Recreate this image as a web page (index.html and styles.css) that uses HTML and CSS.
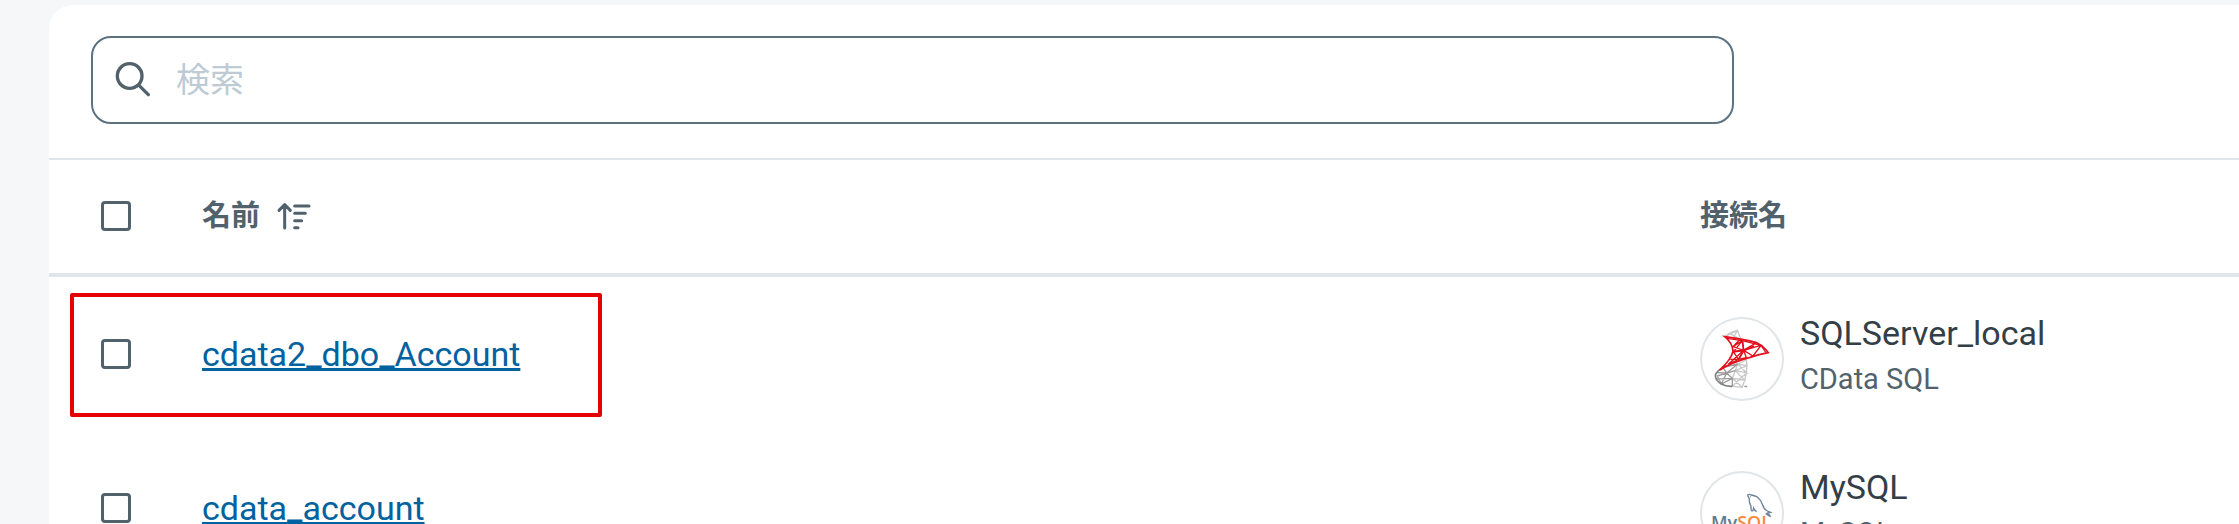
FILE: index.html
```html
<!DOCTYPE html>
<html lang="ja">
<head>
  <meta charset="UTF-8" />
  <meta name="viewport" content="width=device-width, initial-scale=1" />
  <title>接続名</title>
  <link rel="stylesheet" href="styles.css">
</head>
<body>

  <main class="card">
    <!-- Search -->
    <div class="toolbar">
      <label class="search">
        <svg class="search-icon" viewBox="252 183 114 114" aria-hidden="true">
          <circle cx="299" cy="228" r="37" />
          <path d="M327 256L355 284" />
        </svg>
        <input type="search" class="search-input" placeholder="検索" aria-label="検索">
      </label>
    </div>

    <table class="list">
      <thead>
        <tr>
          <th class="col-check"><input type="checkbox" class="check" aria-label="すべて選択"></th>
          <th class="col-name">
            <button type="button" class="sort">
              名前
              <svg class="sort-icon" viewBox="740 155 108 84" aria-hidden="true">
                <path d="M766 233V163M749 180L766 163L783 180M796 167H839M796 189H828M796 211H817M796 232H806" />
              </svg>
            </button>
          </th>
          <th class="col-connection">接続名</th>
        </tr>
      </thead>
      <tbody>
        <tr>
          <td class="col-check">
            <input type="checkbox" class="check" aria-label="cdata2_dbo_Accountを選択">
            <span class="marker"></span>
          </td>
          <td><a href="#" class="name">cdata2_dbo_Account</a></td>
          <td>
            <div class="connection">
              <svg class="logo" viewBox="60 80 252 252" aria-hidden="true">
                <g class="mssql-gray">
                  <path class="light" d="M136 138Q151 124 172 120L184 149M136 138L172 120M150 130L184 149M172 120L158 146" />
                  <path class="light" d="M199 207Q206 240 187 291L157 288M202 226L173 221L200 248L166 241L194 269L157 264L187 291M173 221L166 241L157 264M173 221L198 209M200 248L181 264L157 288M166 241L202 226" />
                  <path class="dark" d="M129 232L140 248L112 257L124 281L157 264L140 248L173 221M140 248L124 281M109 247L140 248M108 266L157 264M129 232L173 221M140 248L166 241M157 264L157 288" />
                  <path class="rim" d="M129 232Q107 243 106 257Q108 272 124 281Q138 289 157 288" />
                </g>
                <g class="mssql-red">
                  <path class="edge" d="M134 139Q199 148 230 157Q252 168 265 187Q238 192 210 201Q151 217 119 239Q154 207 159 183Q158 158 134 139Z" />
                  <path d="M141 144L187 151L159 169L191 180L187 151L243 165L191 180L159 186L187 151M230 157L191 180L219 197L243 165L258 187M191 180L145 222L176 207L159 183M191 180L176 207L199 202L191 180M159 169L178 149M151 207L176 207" />
                  <path class="edge" d="M159 183L191 180L222 168M187 151L191 180L176 207" />
                </g>
                <path class="tm" d="M193 288H200V291" />
              </svg>
              <div class="connection-text">
                <div class="connection-name">SQLServer_local</div>
                <div class="connection-type">CData SQL</div>
              </div>
            </div>
          </td>
        </tr>
        <tr>
          <td class="col-check"><input type="checkbox" class="check" aria-label="cdata_accountを選択"></td>
          <td><a href="#" class="name">cdata_account</a></td>
          <td>
            <div class="connection">
              <svg class="logo" viewBox="60 33 252 252" aria-hidden="true">
                <path class="dolphin" d="M202 106Q207 101 213 105Q224 106 232 111Q244 121 248 135Q251 147 262 153L272 157L263 159L272 170Q264 165 257 160M202 106Q206 110 208 117Q207 126 211 134Q214 139 213 147Q214 155 219 152L221 144Q223 151 230 155M211 110L213 111" />
                <text x="93" y="208" class="mysql-text">My<tspan class="orange">SQL</tspan></text>
              </svg>
              <div class="connection-text">
                <div class="connection-name">MySQL</div>
                <div class="connection-type">MySQL</div>
              </div>
            </div>
          </td>
        </tr>
      </tbody>
    </table>
  </main>

</body>
</html>
```
FILE: styles.css
```css
* {
  box-sizing: border-box;
}

body {
  margin: 0;
  height: 100vh;
  padding: 5px 0 0 49px;
  overflow: hidden;
  background: #f5f7f9;
  color: #333f48;
  font-family: Roboto, "Noto Sans CJK JP", sans-serif;
  font-size: 34px;
}

.card {
  min-height: 100%;
  background: #fff;
  border-top-left-radius: 24px;
}

.toolbar {
  padding: 31px 0 34px;
  border-bottom: 2px solid #e0e5e9;
}

.search {
  display: flex;
  align-items: center;
  gap: 24px;
  width: 75%;
  height: 88px;
  margin-left: 42px;
  padding: 0 21px;
  border: 2px solid #5d7180;
  border-radius: 20px;
}

.search-icon {
  width: 38px;
  height: 38px;
  fill: none;
  stroke: #51626c;
  stroke-width: 10;
  stroke-linecap: round;
}

.search-input {
  flex: 1;
  padding: 0;
  border: none;
  outline: none;
  background: none;
  color: inherit;
  font: inherit;
  line-height: 48px;
}

.search-input::placeholder {
  color: #becad4;
}

.list {
  width: 100%;
  table-layout: fixed;
  border-collapse: separate;
  border-spacing: 0;
}

th,
td {
  padding: 0;
  text-align: left;
}

th {
  height: 117px;
  padding-bottom: 2px;
  border-bottom: 4px solid #e0e5e9;
  color: #51626c;
  font-size: 29px;
  font-weight: bold;
  line-height: 40px;
}

td {
  height: 154px;
}

.col-check {
  position: relative;
  width: 153px;
  padding-left: 52px;
}

.col-name {
  width: 68.4%;
}

.check {
  display: block;
  appearance: none;
  width: 30px;
  height: 30px;
  margin: 0;
  border: 3px solid #51626c;
  border-radius: 4px;
  background: #fff;
}

.check:checked {
  background: #51626c;
}

.sort {
  display: flex;
  align-items: center;
  gap: 16px;
  padding: 0;
  border: none;
  background: none;
  color: inherit;
  font: inherit;
  cursor: pointer;
}

.sort-icon {
  width: 36px;
  height: 28px;
  fill: none;
  stroke: #51626c;
  stroke-width: 9;
  stroke-linecap: round;
  stroke-linejoin: round;
}

.name {
  color: #00629f;
  text-decoration: underline;
  text-decoration-skip-ink: none;
}

/* red frame around the first row */
.marker {
  position: absolute;
  top: 16px;
  left: 21px;
  width: 532px;
  height: 124px;
  border: 4px solid #e60000;
  border-radius: 2px;
  pointer-events: none;
  z-index: 1;
}

.connection {
  display: flex;
  align-items: flex-start;
  gap: 16px;
}

.logo {
  flex: none;
  width: 84px;
  height: 84px;
  margin-top: 9px;
  border-radius: 50%;
  box-shadow: inset 0 0 0 2px #e0e5e9;
  fill: none;
}

.connection-name {
  line-height: 50px;
}

.connection-type {
  color: #51626c;
  font-size: 29px;
  line-height: 42px;
}

.mssql-gray {
  stroke-width: 4;
}

.mssql-gray .light {
  stroke: #c8c8c8;
}

.mssql-gray .dark {
  stroke: #9c9c9c;
}

.mssql-gray .rim {
  stroke: #808080;
  stroke-width: 5;
}

.mssql-red {
  stroke: #e2101c;
  stroke-width: 4;
}

.mssql-red .edge {
  stroke-width: 5;
}

.tm {
  stroke: #777;
  stroke-width: 3;
}

.dolphin {
  stroke: #6b8296;
  stroke-width: 4;
}

.mysql-text {
  fill: #5d7b93;
  font-family: "Open Sans", sans-serif;
  font-size: 54px;
  font-weight: 600;
}

.mysql-text .orange {
  fill: #f58a3c;
}
```
